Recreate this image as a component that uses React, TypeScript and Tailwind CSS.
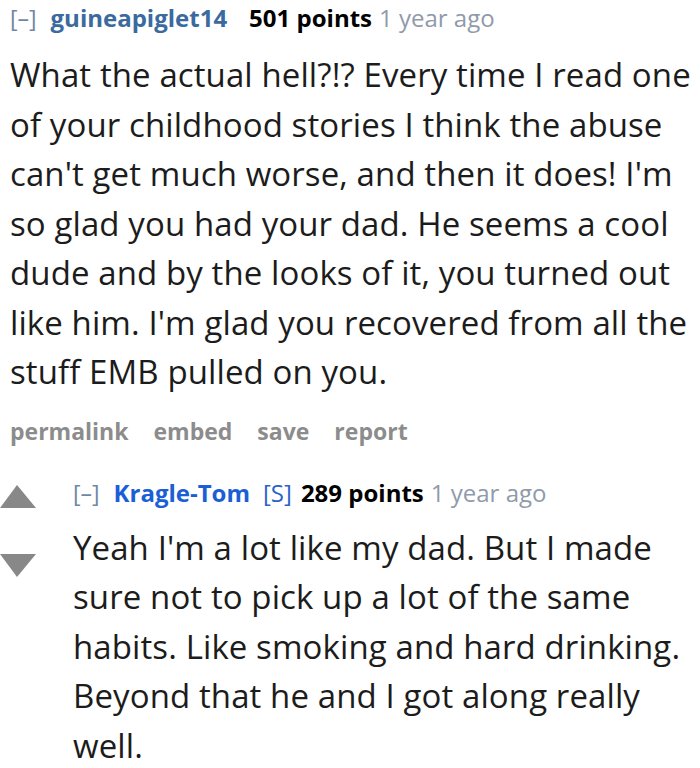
import React from 'react';

const font = { fontFamily: '"Open Sans", "Noto Sans", sans-serif' };

function Tagline({
  author,
  authorClass,
  submitter,
  points,
}: {
  author: string;
  authorClass: string;
  submitter?: boolean;
  points: number;
}) {
  return (
    <div className="flex items-baseline whitespace-nowrap text-[24px] leading-[36px]">
      <span className="text-[#6f86a6] text-[23px] mr-[14px]">[–]</span>
      <span className={`font-bold ${submitter ? 'mr-[13px]' : 'mr-[22px]'} ${authorClass}`}>{author}</span>
      {submitter && <span className="text-[#2a62c9] mr-[9px]">[S]</span>}
      <span className="font-bold text-black mr-[7px]">{points} points</span>
      <span className="text-[#8f9aaa]">1 year ago</span>
    </div>
  );
}

function Body({ lines }: { lines: string[] }) {
  return (
    <div className="text-[33px] leading-[49.5px] tracking-[0.1px] text-[#1c1c1c] whitespace-nowrap">
      {lines.map((l) => (
        <div key={l}>{l}</div>
      ))}
    </div>
  );
}

export default function App() {
  return (
    <div className="w-[700px] h-[768px] overflow-hidden bg-white" style={font}>
      <div className="pl-[10px]">
        <Tagline author="guineapiglet14" authorClass="text-[#3a6a9e]" points={501} />
        <div className="mt-[14px]">
          <Body
            lines={[
              'What the actual hell?!? Every time I read one',
              'of your childhood stories I think the abuse',
              "can't get much worse, and then it does! I'm",
              'so glad you had your dad. He seems a cool',
              'dude and by the looks of it, you turned out',
              "like him. I'm glad you recovered from all the",
              'stuff EMB pulled on you.',
            ]}
          />
        </div>
        <div className="mt-[16px] flex gap-[25px] text-[23px] font-bold text-[#8c8c8c] leading-[36px]">
          <span>permalink</span>
          <span>embed</span>
          <span>save</span>
          <span>report</span>
        </div>
      </div>
      <div className="mt-[26px] flex">
        <div className="w-[73px] shrink-0 flex flex-col items-start pt-[10px]">
          <svg width="37" height="23" viewBox="0 0 37 23">
            <polygon points="17,0 36,23 0,23" fill="#888" />
          </svg>
          <svg width="37" height="23" viewBox="0 0 37 23" className="mt-[46px]">
            <polygon points="0,0 36,0 17,23" fill="#888" />
          </svg>
        </div>
        <div className="flex-1">
          <Tagline author="Kragle-Tom" authorClass="text-[#1a5fd6]" submitter points={289} />
          <div className="mt-[12px]">
            <Body
              lines={[
                "Yeah I'm a lot like my dad. But I made",
                'sure not to pick up a lot of the same',
                'habits. Like smoking and hard drinking.',
                'Beyond that he and I got along really',
                'well.',
              ]}
            />
          </div>
        </div>
      </div>
    </div>
  );
}
